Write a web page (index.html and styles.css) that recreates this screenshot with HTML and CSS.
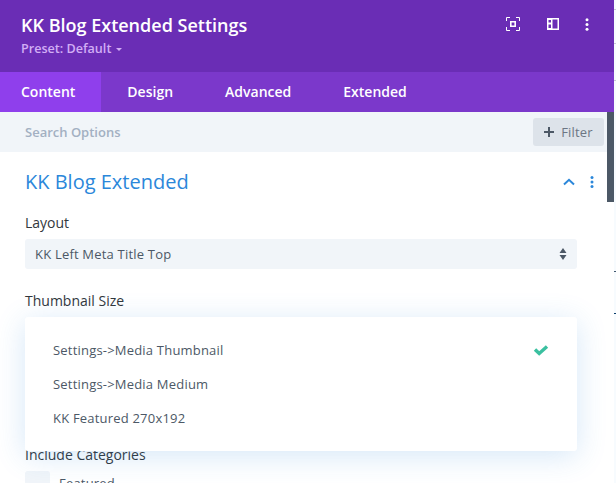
FILE: index.html
```
<!DOCTYPE html>
<html lang="en">
<head>
<meta charset="utf-8">
<title>KK Blog Extended Settings</title>
<link rel="stylesheet" href="styles.css">
</head>
<body>
<div class="page">
  <div class="modal">
    <header class="head">
      <div class="head-text">
        <h1 class="title">KK Blog Extended Settings</h1>
        <div class="preset">Preset: Default <span class="caret"></span></div>
      </div>
      <div class="head-icons">
        <svg class="ico" width="14" height="14" viewBox="0 0 14 14"><path d="M.5 4V.5H4M10 .5h3.500V4M13.500 10v3.500H10M4 13.500H.5V10" fill="none" stroke="#fff" stroke-width="1"/><path fill-rule="evenodd" d="M4 4h6v6H4zM5.600 5.600v2.800h2.800V5.600z" fill="#fff"/></svg>
        <svg class="ico" width="12" height="12" viewBox="0 0 12 12"><path fill-rule="evenodd" d="M0 0h12v12H0zM5.500 1.500v9h5v-9zM1.500 2v2.500h2.500V2zM1.500 6.500V10h2.500V6.500z" fill="#fff"/></svg>
        <svg class="ico" width="4" height="13" viewBox="0 0 4 13"><circle cx="2" cy="1.700" r="1.500" fill="#fff"/><circle cx="2" cy="6.500" r="1.500" fill="#fff"/><circle cx="2" cy="11.300" r="1.500" fill="#fff"/></svg>
      </div>
    </header>
    <nav class="tabs">
      <div class="tab tab-active">Content</div>
      <div class="tab">Design</div>
      <div class="tab">Advanced</div>
      <div class="tab">Extended</div>
    </nav>
    <div class="search">
      <span class="search-text">Search Options</span>
      <div class="filter"><svg width="10" height="10" viewBox="0 0 10 10"><path d="M5 0v10M0 5h10" stroke="#4c5866" stroke-width="2"/></svg><span>Filter</span></div>
    </div>
    <div class="body">
      <div class="section-head">
        <h2 class="section-title">KK Blog Extended</h2>
        <div class="section-icons">
          <svg width="12" height="8" viewBox="0 0 12 8"><path d="M1 6.500L6 1.800l5 4.700" fill="none" stroke="#2b87da" stroke-width="2"/></svg>
          <svg width="4" height="12" viewBox="0 0 4 12"><circle cx="2" cy="1.500" r="1.500" fill="#2b87da"/><circle cx="2" cy="6" r="1.500" fill="#2b87da"/><circle cx="2" cy="10.500" r="1.500" fill="#2b87da"/></svg>
        </div>
      </div>
      <div class="label label-layout">Layout</div>
      <div class="select">
        <span>KK Left Meta Title Top</span>
        <svg width="8" height="12" viewBox="0 0 8 12"><path d="M4 0l3.500 5h-7zM4 12L.5 7h7z" fill="#4c5866"/></svg>
      </div>
      <div class="label label-thumb">Thumbnail Size</div>
      <div class="label label-cats">Include Categories</div>
      <div class="check-row"><span class="check"></span><span class="check-text">Featured</span></div>
      <ul class="menu">
        <li class="menu-item">Settings-&gt;Media Thumbnail
          <svg width="16" height="12" viewBox="0 0 16 12"><path d="M2 5.500l4.200 4L14 2.500" fill="none" stroke="#3ac0a0" stroke-width="3.400"/></svg>
        </li>
        <li class="menu-item">Settings-&gt;Media Medium</li>
        <li class="menu-item">KK Featured 270x192</li>
      </ul>
    </div>
    <div class="scrollbar"></div>
  </div>
  <div class="behind">
    <span class="line line-a"></span>
    <span class="line line-b"></span>
    <span class="line line-c"></span>
    <span class="line line-d"></span>
    <span class="line line-e"></span>
  </div>
</div>
</body>
</html>
```

FILE: styles.css
```
* { box-sizing: border-box; }
html, body { margin: 0; padding: 0; height: 100%; overflow: hidden; background: #fff; }
body { font-family: "Open Sans", sans-serif; }
.page { display: flex; width: 616px; height: 483px; overflow: hidden; }
.modal { position: relative; width: 614px; height: 483px; flex: none; display: flex; flex-direction: column; background: #fff; overflow: hidden; }
.behind { position: relative; flex: 1; background: #f7fbfe; }
.line { position: absolute; left: 0; width: 2px; height: 1px; background: #c9c9d6; }
.line-a { top: 9px; }
.line-b { top: 43px; }
.line-c { top: 80px; }
.line-d { top: 271px; background: #40586f; }
.line-e { top: 313px; background: #0c3f6d; }

.head { height: 72px; flex: none; background: #6a2db5; padding: 0 25px 0 21px; display: flex; justify-content: space-between; }
.title { margin: 13px 0 0; font-size: 18px; line-height: 25px; font-weight: 600; color: #fff; }
.preset { margin-top: 2px; font-size: 12.600px; line-height: 18px; font-weight: 600; color: #d2aef5; }
.caret { display: inline-block; margin-left: 1px; vertical-align: 2px; border: 3px solid transparent; border-top: 3px solid #d2aef5; border-bottom: 0; }
.head-icons { display: flex; align-items: center; height: 48px; }
.head-icons .ico { display: block; }
.head-icons .ico:nth-child(1) { margin-right: 27px; }
.head-icons .ico:nth-child(2) { margin-right: 26px; }

.tabs { height: 40px; flex: none; display: flex; background: #7b38cb; }
.tab { padding: 0 26px 0 26px; font-size: 14px; line-height: 40px; font-weight: 600; color: #fff; }
.tab:nth-child(1) { padding: 0 26px 0 21px; }
.tab-active { background: #8f3fec; }

.search { height: 40px; flex: none; background: #f1f5f9; display: flex; align-items: center; justify-content: space-between; padding: 0 10px 0 25px; }
.search-text { font-size: 13px; font-weight: 600; color: #a3b0c2; }
.filter { width: 71px; height: 28px; background: #dde3ea; border-radius: 3px; display: flex; align-items: center; justify-content: center; gap: 7px; font-size: 13px; font-weight: 500; letter-spacing: .2px; color: #6c7683; }

.body { position: relative; flex: 1; padding: 0 37px 0 25px; }
.section-head { height: 60px; margin-right: -20px; display: flex; align-items: center; justify-content: space-between; }
.section-title { margin: 0; font-size: 20px; line-height: 60px; font-weight: 400; color: #2b87da; }
.section-icons { display: flex; align-items: center; gap: 15px; padding-right: 3px; }
.label { font-size: 14px; line-height: 20px; color: #32373c; }
.label-layout { margin-top: 0; padding-top: 1px; height: 20px; }
.select { margin-top: 7px; height: 30px; background: #f1f5f9; border-radius: 3px; padding: 0 10px; display: flex; align-items: center; justify-content: space-between; font-size: 13px; font-weight: 500; letter-spacing: .2px; color: #4c5866; }
.label-thumb { margin-top: 22px; }
.label-cats { margin-top: 134px; }
.check-row { display: flex; gap: 9px; margin-top: 6px; }
.check { width: 25px; height: 28px; flex: none; background: #f1f5f9; border-radius: 3px; }
.check-text { font-size: 13px; font-weight: 500; letter-spacing: .2px; color: #4c5866; line-height: 25px; }

.menu { position: absolute; left: 25px; top: 165px; width: 552px; height: 134px; margin: 0; padding: 16px 28px 0; list-style: none; background: #fff; border-radius: 3px; box-shadow: 0 5px 30px rgba(43, 135, 218, .2); }
.menu-item { height: 34px; display: flex; align-items: center; justify-content: space-between; font-size: 13px; font-weight: 500; letter-spacing: .2px; color: #4c5866; }

.scrollbar { position: absolute; right: 0; top: 112px; width: 7px; height: 90px; background: #4c5866; }
```
